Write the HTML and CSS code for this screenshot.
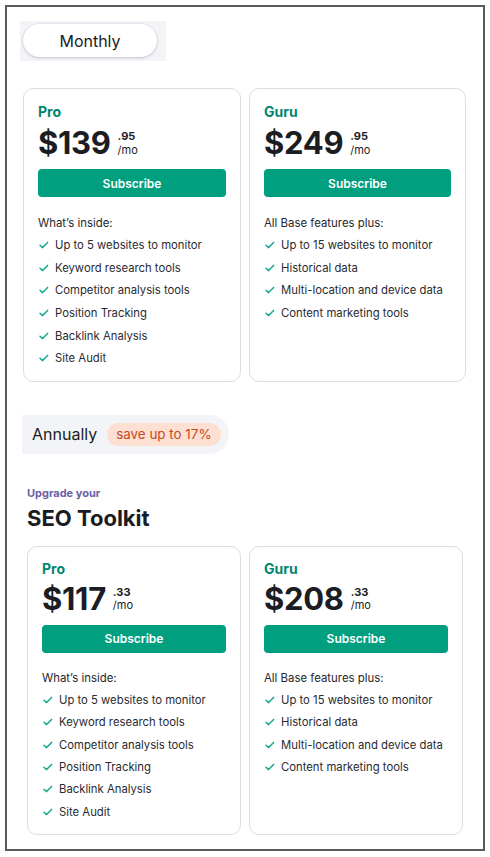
FILE: index.html
```html
<!DOCTYPE html>
<html lang="en">
<head>
<meta charset="utf-8">
<title>SEO Toolkit pricing</title>
<link rel="stylesheet" href="styles.css">
</head>
<body>
<div class="frame">
  <div class="toggle-row monthly-row">
    <div class="toggle monthly-toggle">
      <div class="pill">Monthly</div>
    </div>
  </div>

  <div class="cards cards-monthly">
    <div class="card">
      <div class="plan">Pro</div>
      <div class="price"><span class="amount">$139</span><span class="cents"><b>.95</b><span>/mo</span></span></div>
      <button class="subscribe">Subscribe</button>
      <div class="lead">What’s inside:</div>
      <ul class="features">
        <li><svg viewBox="0 0 12 10" class="check"><path d="M2 5.2 L4.6 7.6 L9.6 2.4"/></svg>Up to 5 websites to monitor</li>
        <li><svg viewBox="0 0 12 10" class="check"><path d="M2 5.2 L4.6 7.6 L9.6 2.4"/></svg>Keyword research tools</li>
        <li><svg viewBox="0 0 12 10" class="check"><path d="M2 5.2 L4.6 7.6 L9.6 2.4"/></svg>Competitor analysis tools</li>
        <li><svg viewBox="0 0 12 10" class="check"><path d="M2 5.2 L4.6 7.6 L9.6 2.4"/></svg>Position Tracking</li>
        <li><svg viewBox="0 0 12 10" class="check"><path d="M2 5.2 L4.6 7.6 L9.6 2.4"/></svg>Backlink Analysis</li>
        <li><svg viewBox="0 0 12 10" class="check"><path d="M2 5.2 L4.6 7.6 L9.6 2.4"/></svg>Site Audit</li>
      </ul>
    </div>
    <div class="card">
      <div class="plan">Guru</div>
      <div class="price"><span class="amount">$249</span><span class="cents"><b>.95</b><span>/mo</span></span></div>
      <button class="subscribe">Subscribe</button>
      <div class="lead">All Base features plus:</div>
      <ul class="features">
        <li><svg viewBox="0 0 12 10" class="check"><path d="M2 5.2 L4.6 7.6 L9.6 2.4"/></svg>Up to 15 websites to monitor</li>
        <li><svg viewBox="0 0 12 10" class="check"><path d="M2 5.2 L4.6 7.6 L9.6 2.4"/></svg>Historical data</li>
        <li><svg viewBox="0 0 12 10" class="check"><path d="M2 5.2 L4.6 7.6 L9.6 2.4"/></svg>Multi-location and device data</li>
        <li><svg viewBox="0 0 12 10" class="check"><path d="M2 5.2 L4.6 7.6 L9.6 2.4"/></svg>Content marketing tools</li>
      </ul>
    </div>
  </div>

  <div class="toggle-row annual-row">
    <div class="toggle annual-toggle">
      <span class="annual-label">Annually</span>
      <span class="badge">save up to 17%</span>
    </div>
  </div>

  <div class="heading">
    <div class="eyebrow">Upgrade your</div>
    <h1 class="title">SEO Toolkit</h1>
  </div>

  <div class="cards cards-annual">
    <div class="card">
      <div class="plan">Pro</div>
      <div class="price"><span class="amount">$117</span><span class="cents"><b>.33</b><span>/mo</span></span></div>
      <button class="subscribe">Subscribe</button>
      <div class="lead">What’s inside:</div>
      <ul class="features">
        <li><svg viewBox="0 0 12 10" class="check"><path d="M2 5.2 L4.6 7.6 L9.6 2.4"/></svg>Up to 5 websites to monitor</li>
        <li><svg viewBox="0 0 12 10" class="check"><path d="M2 5.2 L4.6 7.6 L9.6 2.4"/></svg>Keyword research tools</li>
        <li><svg viewBox="0 0 12 10" class="check"><path d="M2 5.2 L4.6 7.6 L9.6 2.4"/></svg>Competitor analysis tools</li>
        <li><svg viewBox="0 0 12 10" class="check"><path d="M2 5.2 L4.6 7.6 L9.6 2.4"/></svg>Position Tracking</li>
        <li><svg viewBox="0 0 12 10" class="check"><path d="M2 5.2 L4.6 7.6 L9.6 2.4"/></svg>Backlink Analysis</li>
        <li><svg viewBox="0 0 12 10" class="check"><path d="M2 5.2 L4.6 7.6 L9.6 2.4"/></svg>Site Audit</li>
      </ul>
    </div>
    <div class="card">
      <div class="plan">Guru</div>
      <div class="price"><span class="amount">$208</span><span class="cents"><b>.33</b><span>/mo</span></span></div>
      <button class="subscribe">Subscribe</button>
      <div class="lead">All Base features plus:</div>
      <ul class="features">
        <li><svg viewBox="0 0 12 10" class="check"><path d="M2 5.2 L4.6 7.6 L9.6 2.4"/></svg>Up to 15 websites to monitor</li>
        <li><svg viewBox="0 0 12 10" class="check"><path d="M2 5.2 L4.6 7.6 L9.6 2.4"/></svg>Historical data</li>
        <li><svg viewBox="0 0 12 10" class="check"><path d="M2 5.2 L4.6 7.6 L9.6 2.4"/></svg>Multi-location and device data</li>
        <li><svg viewBox="0 0 12 10" class="check"><path d="M2 5.2 L4.6 7.6 L9.6 2.4"/></svg>Content marketing tools</li>
      </ul>
    </div>
  </div>
</div>
</body>
</html>
```

FILE: styles.css
```css
* { box-sizing: border-box; }

html, body {
  margin: 0;
  padding: 0;
  background: #ffffff;
}

body {
  font-family: Inter, "Noto Sans", "Liberation Sans", sans-serif;
  color: #1f1f24;
}

.frame {
  margin: 5px 0 0 5px;
  width: 480px;
  height: 846px;
  border: 2px solid #5b5b5b;
  background: #ffffff;
}

/* toggles */
.toggle-row {
  display: flex;
}

.monthly-row {
  padding: 14px 0 0 13px;
}

.toggle {
  display: flex;
  align-items: center;
  background: #f3f4f8;
}

.monthly-toggle {
  width: 146px;
  height: 40px;
  padding: 3px 9px 4px 3px;
}

.pill {
  flex: 1;
  height: 33px;
  border-radius: 17px;
  background: #ffffff;
  box-shadow: 0 1px 3px rgba(20, 20, 40, 0.18), 0 0 0 1px rgba(20, 20, 40, 0.04);
  display: flex;
  align-items: center;
  justify-content: center;
  font-size: 16px;
  color: #1b1b20;
}

.annual-row {
  padding: 33px 0 0 15px;
}

.annual-toggle {
  width: 207px;
  height: 39px;
  padding: 0 8px 0 10px;
  border-radius: 0 20px 20px 0;
  gap: 10px;
}

.annual-label {
  font-size: 16px;
  color: #1b1b20;
  white-space: nowrap;
}

.badge {
  flex: none;
  height: 23px;
  padding: 0 9px;
  border-radius: 12px;
  background: #fde0d2;
  color: #c34a1f;
  font-size: 13.4px;
  white-space: nowrap;
  display: flex;
  align-items: center;
}

/* heading */
.heading {
  padding: 31px 0 0 20px;
}

.eyebrow {
  font-size: 11px;
  line-height: 16px;
  font-weight: 700;
  color: #6c60a6;
}

.title {
  margin: 3px 0 0;
  font-size: 22px;
  line-height: 28px;
  font-weight: 700;
  color: #1b1b22;
}

/* cards */
.cards {
  display: grid;
  gap: 8px;
}

.cards-monthly {
  margin-top: 27px;
  padding-left: 16px;
  grid-template-columns: 218px 217px;
}

.cards-annual {
  margin-top: 14px;
  padding-left: 20px;
  grid-template-columns: 214px 214px;
}

.card {
  border: 1px solid #dcdee2;
  border-radius: 10px;
  padding: 13px 14px 11px;
  display: flex;
  flex-direction: column;
  background: #ffffff;
}

.plan {
  font-size: 14px;
  line-height: 20px;
  font-weight: 700;
  color: #00866d;
}

.price {
  margin-top: 3px;
  display: flex;
  align-items: center;
  height: 36px;
}

.amount {
  font-size: 31px;
  line-height: 36px;
  font-weight: 700;
  color: #1c1c23;
  letter-spacing: -0.3px;
}

.cents {
  display: flex;
  flex-direction: column;
  margin-left: 7px;
  font-size: 11px;
  line-height: 13.5px;
  color: #1c1c23;
  padding-top: 1px;
}

.cents b {
  font-weight: 700;
}

.subscribe {
  margin-top: 8px;
  height: 28px;
  width: 100%;
  border: none;
  border-radius: 4px;
  background: #009f80;
  color: #ffffff;
  font-family: inherit;
  font-size: 12px;
  font-weight: 600;
  padding: 0;
}

.lead {
  margin-top: 16px;
  font-size: 11.4px;
  line-height: 20px;
  color: #26262c;
  white-space: nowrap;
}

.features {
  list-style: none;
  margin: 1px 0 0;
  padding: 0;
}

.features li {
  display: flex;
  align-items: center;
  height: 22.6px;
  font-size: 11.3px;
  color: #2a2a30;
  white-space: nowrap;
}

.check {
  width: 12px;
  height: 10px;
  margin-right: 5px;
  flex: none;
}

.check path {
  fill: none;
  stroke: #17a88d;
  stroke-width: 1.5;
  stroke-linecap: round;
  stroke-linejoin: round;
}

.cards-annual .card {
  padding-top: 12px;
  padding-bottom: 11px;
}

.cards-annual .price {
  margin-top: 2px;
}

.cards-annual .lead {
  margin-top: 15px;
}

.cards-annual .features li {
  height: 22.4px;
}
```
